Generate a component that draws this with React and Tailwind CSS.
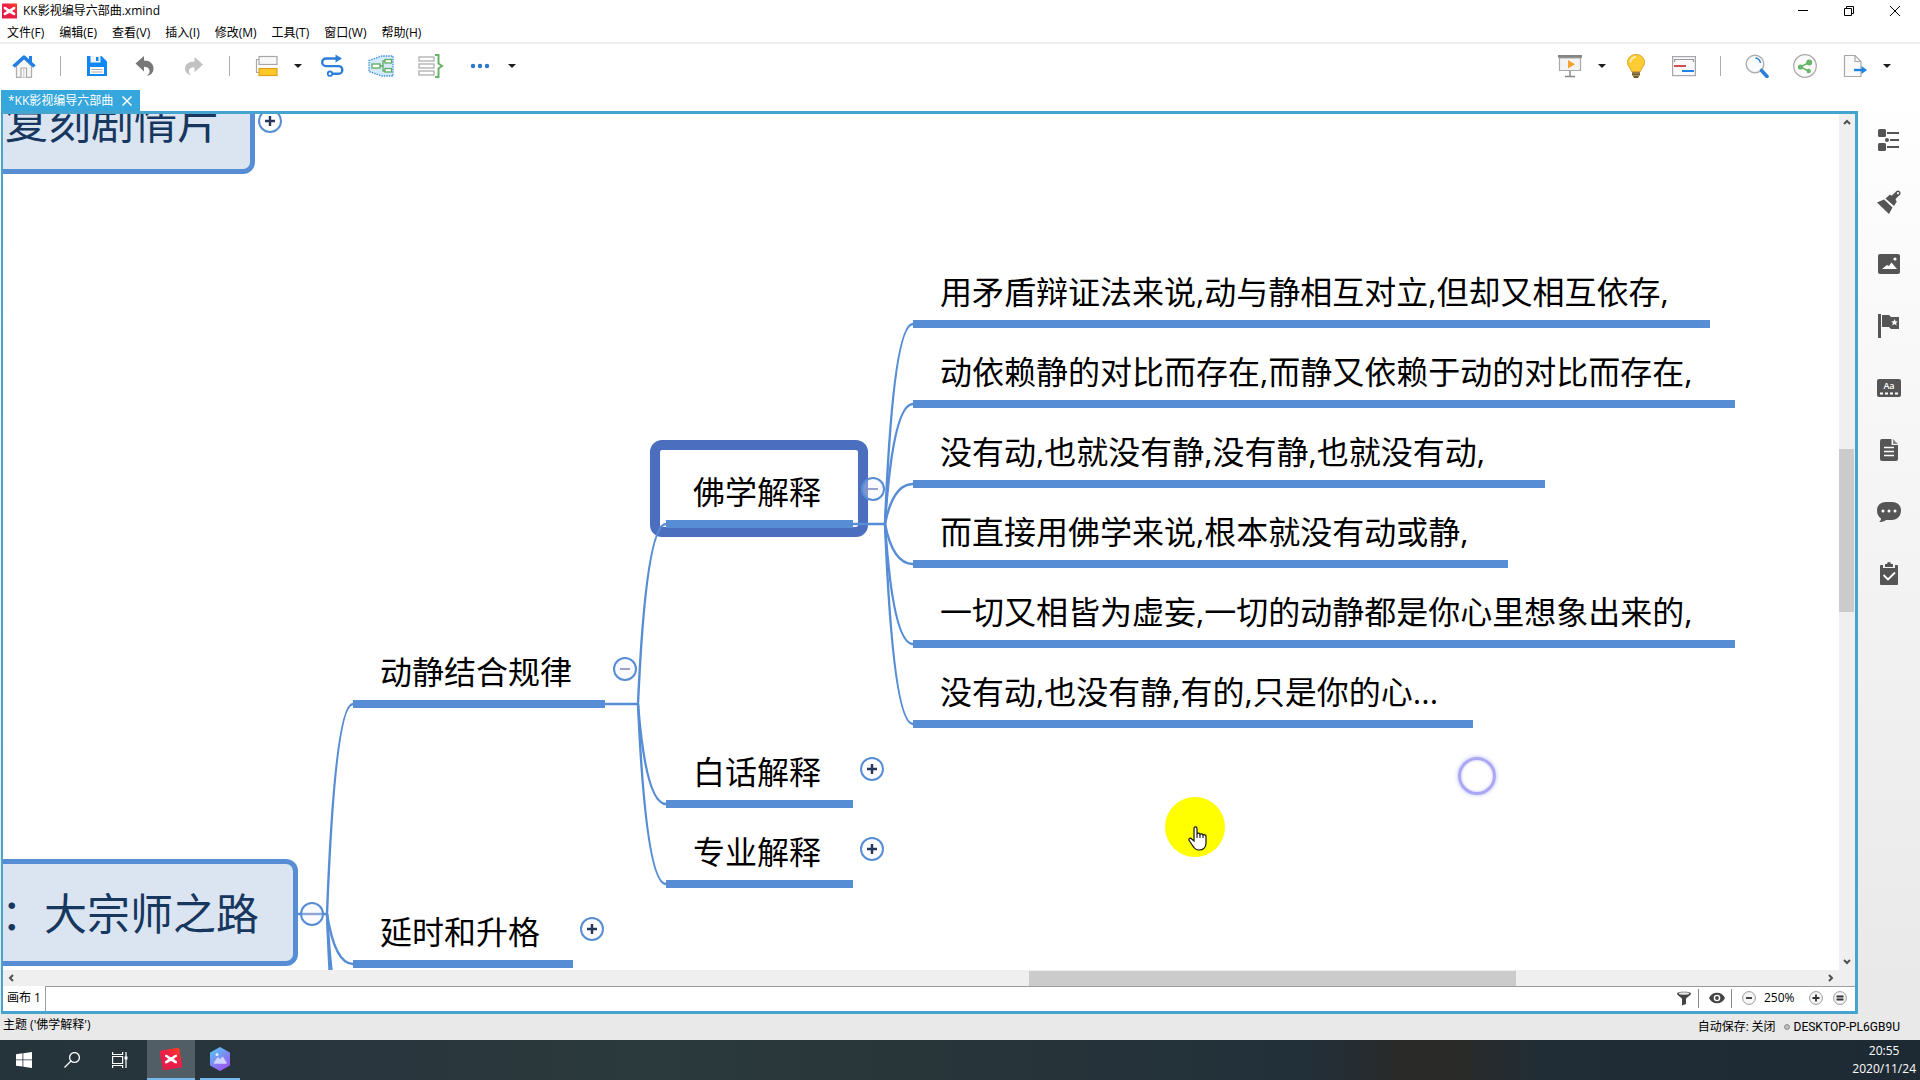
import { useState } from 'react'

const MENUS = ['文件(F)', '编辑(E)', '查看(V)', '插入(I)', '修改(M)', '工具(T)', '窗口(W)', '帮助(H)']

const LINE = '#568dd5'

// Canvas coordinates, origin at the top left corner of the sheet
const NODES = [
  { text: '动静结合规律', x: 350, y: 539, w: 252 },
  { text: '延时和升格', x: 350, y: 799, w: 220 },
  { text: '佛学解释', x: 663, y: 359, w: 187 },
  { text: '白话解释', x: 663, y: 639, w: 187 },
  { text: '专业解释', x: 663, y: 719, w: 187 },
  { text: '用矛盾辩证法来说,动与静相互对立,但却又相互依存,', x: 910, y: 159, w: 797 },
  { text: '动依赖静的对比而存在,而静又依赖于动的对比而存在,', x: 910, y: 239, w: 822 },
  { text: '没有动,也就没有静,没有静,也就没有动,', x: 910, y: 319, w: 632 },
  { text: '而直接用佛学来说,根本就没有动或静,', x: 910, y: 399, w: 595 },
  { text: '一切又相皆为虚妄,一切的动静都是你心里想象出来的,', x: 910, y: 479, w: 822 },
  { text: '没有动,也没有静,有的,只是你的心...', x: 910, y: 559, w: 560 },
]

const TOGGLES = [
  { x: 255, y: -5, open: false },
  { x: 297, y: 788, open: true },
  { x: 610, y: 543, open: true },
  { x: 577, y: 803, open: false },
  { x: 858, y: 363, open: true },
  { x: 857, y: 643, open: false },
  { x: 857, y: 723, open: false },
]

const BRANCHES = [
  { x: 324, y: 800, to: 350, ys: [590, 850, 930, 1010] },
  { x: 635, y: 590, to: 663, ys: [410, 690, 770] },
  { x: 882, y: 410, to: 910, ys: [210, 290, 370, 450, 530, 610] },
]

function Logo({ className, tilt }) {
  return (
    <svg viewBox="0 0 16 16" className={className}>
      <defs>
        <linearGradient id="logo" x1="1" y1="0" x2="0" y2="1">
          <stop offset="0" stopColor="#fb3f20" />
          <stop offset="0.4" stopColor="#f01f45" />
          <stop offset="1" stopColor="#e01c4c" />
        </linearGradient>
      </defs>
      <rect width="16" height="16" rx="0.6" fill="url(#logo)" transform={tilt ? 'rotate(-10 8 8) translate(0.8 0.8) scale(0.9)' : undefined} />
      <path
        d="M1.8 3.6C4.6 3.4 6 5.8 8 6.2 10 5.8 11.4 3.4 14.2 3.6L14 6C12.4 6.2 11.6 7.4 10.8 8.1 11.6 8.8 12.6 9.8 14.2 10.2L14 12.6C11.4 12.6 10 10.4 8 10 6 10.4 4.6 12.6 2 12.6L1.8 10.2C3.4 9.8 4.4 8.8 5.2 8.1 4.4 7.4 3.6 6.2 2 6z"
        fill="#fff"
        transform={tilt ? 'translate(2.4 2.4) scale(0.7)' : undefined}
      />
    </svg>
  )
}

function Tool({ label, wide, children }) {
  return (
    <button type="button" aria-label={label} className={wide ? 'w-[26px] h-6 shrink-0' : 'w-6 h-6 shrink-0'}>
      <svg viewBox={wide ? '0 0 26 24' : '0 0 24 24'} className="w-full h-full" fill="none">
        {children}
      </svg>
    </button>
  )
}

function Caret({ label }) {
  return (
    <button type="button" aria-label={label} className="w-2 h-6 flex items-center shrink-0">
      <svg viewBox="0 0 8 4" className="w-2 h-1">
        <path d="M0 0h8L4 4z" fill="#1d1d1d" />
      </svg>
    </button>
  )
}

function Toolbar() {
  return (
    <div className="h-[46px] mb-0.5 flex items-center justify-between pl-3 pr-[29px] border-t-2 border-[#efefef]">
      <div className="flex items-center gap-6">
        <Tool label="主页">
          <path d="M4.5 12v11.5h15V12L12 4.5z" fill="#f7f7f7" stroke="#b0b0b0" strokeWidth="1.3" />
          <path d="M9 23.5V14h5.5v9.5" fill="#fff" stroke="#a8a8a8" strokeWidth="1.2" />
          <path d="M11.8 14v9.5" stroke="#c4c4c4" />
          <path d="M1.5 12.5L12 3l10.500 9.5" stroke="#2080e4" strokeWidth="3.4" strokeLinejoin="round" />
          <path d="M17 2h3v6h-3z" fill="#2080e4" />
        </Tool>
        <div className="w-px h-5 bg-[#adadad]" />
        <Tool label="保存">
          <path d="M2 2h14.5L22 7.5V22H2z" fill="#0f87f5" />
          <path d="M5.5 2h10v6.5h-10z" fill="#f3f3f3" />
          <path d="M11 3h2.5v4H11z" fill="#0f87f5" />
          <path d="M5 13h14v7H5z" fill="#fff" />
          <path d="M6.5 15.5h11M6.5 18h11" stroke="#a9a9a9" strokeWidth="1.2" />
        </Tool>
        <Tool label="撤销">
          <path d="M2.500 9.500L11 2v4.500c6 0 9.500 3.300 9.500 8 0 4-2.500 6.500-6.500 7.500 2.500-2.300 3-4.500 2.300-6.300-.8-2-2.700-2.900-5.300-2.900v4.700z" fill="#777" />
        </Tool>
        <Tool label="重做">
          <path d="M22 10.500L13.500 3v4.500c-6 0-9.500 3-9.500 7 0 3.700 2.300 5.700 6 6.700-2-2-2.500-4-1.800-5.500.8-1.800 2.700-2.500 5.300-2.500v5z" fill="#c2c2c2" />
        </Tool>
        <div className="w-px h-5 bg-[#adadad]" />
        <div className="flex items-center gap-4 -mr-1.5">
          <Tool label="主题">
            <path d="M5 5.5H2.5v13H5" stroke="#a8a8a8" strokeWidth="1.2" />
            <rect x="5" y="2.5" width="18" height="8" fill="#f8f8f8" stroke="#a8a8a8" strokeWidth="1.2" />
            <rect x="5" y="14.500" width="18" height="7" fill="#ffc928" stroke="#dfa21e" strokeWidth="1.2" />
          </Tool>
          <Caret label="更多主题" />
        </div>
        <Tool label="联系">
          <path d="M17 4.5H6a3.8 3.8 0 0 0 0 7.6h12.5a3.8 3.8 0 0 1 0 7.6H12" stroke="#2b7fd8" strokeWidth="2.4" />
          <path d="M15.5 .5l6.5 4-6.5 4z" fill="#2b7fd8" />
          <circle cx="10" cy="19.7" r="2.2" stroke="#2b7fd8" strokeWidth="1.8" />
        </Tool>
        <Tool label="外框" wide>
          <path d="M1 6.5L14 2h11v20H14L1 17.5z" fill="#d4ebfb" stroke="#3f8ede" strokeWidth="1.3" strokeDasharray="1.5 1" />
          <path d="M12 12h3M17 7h-2v10h2" stroke="#62a960" strokeWidth="1.3" />
          <rect x="4" y="10" width="8" height="4" fill="#fff" stroke="#62a960" strokeWidth="1.3" />
          <rect x="17" y="5.5" width="6.5" height="3.5" fill="#fff" stroke="#62a960" strokeWidth="1.3" />
          <rect x="17" y="14.5" width="6.5" height="3.5" fill="#fff" stroke="#62a960" strokeWidth="1.3" />
        </Tool>
        <Tool label="概要" wide>
          <rect x="1" y="3" width="15" height="4" stroke="#a8a8a8" strokeWidth="1.2" />
          <rect x="1" y="10" width="15" height="4" stroke="#a8a8a8" strokeWidth="1.2" />
          <rect x="1" y="17" width="15" height="4" stroke="#a8a8a8" strokeWidth="1.2" />
          <path d="M17 1h3.5v8.5L24 12l-3.5 2.5V23H17" stroke="#6bb167" strokeWidth="2" />
        </Tool>
        <div className="flex items-center gap-4">
          <Tool label="更多">
            <circle cx="5" cy="12" r="2.2" fill="#2b76d0" />
            <circle cx="12" cy="12" r="2.2" fill="#2b76d0" />
            <circle cx="19" cy="12" r="2.2" fill="#2b76d0" />
          </Tool>
          <Caret label="更多选项" />
        </div>
      </div>

      <div className="flex items-center gap-6">
        <div className="flex items-center gap-4 -mr-1.5">
          <Tool label="演示">
            <path d="M1.5 4h21v12.5h-21z" fill="#f4f4f4" stroke="#a8a8a8" strokeWidth="1.2" />
            <path d="M0 1h24v2.8H0z" fill="#858585" />
            <path d="M10 6l7 4.3-7 4.3z" fill="#f5a32f" />
            <path d="M12 17v5M7 22.5h10" stroke="#858585" strokeWidth="1.4" />
          </Tool>
          <Caret label="演示选项" />
        </div>
        <Tool label="头脑风暴">
          <path d="M8 17h8v3.5L14 24h-4l-2-3.5z" fill="#6f5a2d" />
          <path d="M8 19h8M8 21.5h8" stroke="#c3a869" strokeWidth="0.8" />
          <path d="M12 .5c5 0 8.5 3.5 8.5 8 0 4-3.3 5-4 9h-9c-.7-4-4-5-4-9C3.5 4 7 .5 12 .5z" fill="#fdcb34" stroke="#dda42b" />
          <path d="M6.5 8.5C6.5 5 9 3 12 3" stroke="#ffeeb0" strokeWidth="2" />
        </Tool>
        <Tool label="甘特图">
          <rect x="0.6" y="2.6" width="22.8" height="19" fill="#fafafa" stroke="#a5a5ae" strokeWidth="1.2" />
          <path d="M2.5 8V5.5h19V8" stroke="#9a9a9a" strokeWidth="1.2" />
          <path d="M2 12h12" stroke="#cf4f56" strokeWidth="2" />
          <path d="M10 17h12" stroke="#2083e4" strokeWidth="2" />
        </Tool>
        <div className="w-px h-5 bg-[#adadad]" />
        <Tool label="搜索">
          <circle cx="10" cy="10" r="8.8" fill="#f8fafc" stroke="#adadad" strokeWidth="1.4" />
          <path d="M10.500 4c2.500.3 4.500 2.300 5 5" stroke="#2b7fd8" strokeWidth="1.3" />
          <path d="M16.500 16.500l5.500 6" stroke="#2b7fd8" strokeWidth="3.6" strokeLinecap="round" />
        </Tool>
        <Tool label="分享">
          <circle cx="12" cy="12" r="11.3" fill="#fafafa" stroke="#a8a8a8" strokeWidth="1.2" />
          <path d="M16 8.5L7.5 13l8 4" stroke="#6bb56b" strokeWidth="1.5" />
          <circle cx="16.2" cy="8.5" r="3" fill="#6bb56b" />
          <circle cx="7.5" cy="13" r="2.6" fill="#6bb56b" />
          <circle cx="15.7" cy="17" r="2.2" fill="#6bb56b" />
        </Tool>
        <div className="flex items-center gap-4 ml-0.5">
          <Tool label="导出">
            <path d="M1.5 1.5H12l6 6v15H1.5z" fill="#fafafa" stroke="#a8a8a8" strokeWidth="1.2" />
            <path d="M12 1.5v6h6" stroke="#a8a8a8" strokeWidth="1.2" />
            <path d="M11 16h8" stroke="#2083e4" strokeWidth="2.4" />
            <path d="M18.5 12l5.5 4-5.5 4z" fill="#2083e4" />
          </Tool>
          <Caret label="导出选项" />
        </div>
      </div>
    </div>
  )
}

function Toggle({ x, y, open }) {
  return (
    <button type="button" aria-label={open ? '收起' : '展开'} className="absolute w-6 h-6" style={{ left: x, top: y }}>
      <svg viewBox="0 0 24 24" className="w-6 h-6">
        <circle cx="12" cy="12" r="11" fill={open ? '#eef1fb' : '#fff'} fillOpacity={open ? 0.3 : 1} stroke={LINE} strokeWidth="2" />
        {open ? (
          <path d="M7 12h10" stroke="#9a9fcb" strokeWidth="2" />
        ) : (
          <path d="M7 12h10M12 7v10" stroke="#27375c" strokeWidth="2.4" />
        )}
      </svg>
    </button>
  )
}

function MindMap() {
  return (
    <div className="relative flex-1 min-w-0 overflow-hidden bg-white">
      <div className="absolute left-0 -top-10 w-[252px] h-[100px] flex items-end pb-4 pl-0.5 bg-[#dbe5f2] border-[5px] border-l-0 border-[#568dd5] rounded-r-xl text-[43px] leading-[60px] text-[#17375e] whitespace-nowrap">
        复刻剧情片
      </div>
      <div className="absolute left-0 top-[745px] w-[295px] h-[107px] flex items-center justify-end pr-[34px] pt-0.5 bg-[#dbe5f2] border-[5px] border-l-0 border-[#568dd5] rounded-r-xl text-[43px] leading-[60px] text-[#17375e] whitespace-nowrap">
        ：大宗师之路
      </div>

      <div className="absolute left-[647px] top-[326px] w-[218px] h-[97px] border-[10px] border-[#4b6ebf] rounded-xl" />

      <svg className="absolute inset-0 w-full h-full" fill="none" stroke={LINE} strokeWidth="2.4">
        <path d="M295 800h29M602 590h33M850 410h32" />
        {BRANCHES.map((b) =>
          b.ys.map((y) => <path key={`${b.x}-${y}`} d={`M${b.x} ${b.y}Q${b.x + 8} ${y} ${b.to} ${y}`} />)
        )}
      </svg>

      {NODES.map((n) => (
        <div
          key={n.text}
          className="absolute h-[55px] pl-[27px] border-b-8 border-[#568dd5] text-[32px] leading-[38px] text-black whitespace-nowrap"
          style={{ left: n.x, top: n.y, width: n.w }}
        >
          {n.text}
        </div>
      ))}

      {TOGGLES.map((t) => (
        <Toggle key={`${t.x}-${t.y}`} {...t} />
      ))}

      {/* click ripple and pointer highlight */}
      <div className="absolute left-[1455px] top-[643px] w-[38px] h-[38px] rounded-full border-[3px] border-[#aaa8f4] shadow-[0_0_4px_#b9b7fa,inset_0_0_3px_#b9b7fa]" />
      <div className="absolute left-[1162px] top-[683px] w-[60px] h-[60px] rounded-full bg-[#ffff00]">
        <svg viewBox="0 0 19 25" className="absolute left-[23px] top-[29px] w-[19px] h-[25px]">
          <path
            d="M6 15V2.500C6 .3 9 .3 9 2.500V8c.5-1.300 2.800-1.200 3 .5.7-1.100 2.700-.8 3 .7.800-.9 3-.5 3 1.300V17c0 4-2.500 7-7 7-3.500 0-5-1.800-6.500-4.500L1.200 14.500C.2 12.500 2.400 11.500 3.700 13z"
            fill="#fff"
            stroke="#111"
            strokeWidth="1.2"
          />
          <path d="M9 8v4M12 8.500V12M15 9.500V12" stroke="#111" strokeWidth="1.1" />
        </svg>
      </div>
    </div>
  )
}

function Arrow({ d, label }) {
  return (
    <button type="button" aria-label={label} className="w-4 h-4 flex items-center justify-center shrink-0">
      <svg viewBox="0 0 8 8" className="w-2 h-2" fill="none" stroke="#505050" strokeWidth="2">
        <path d={d} />
      </svg>
    </button>
  )
}

function Zoom({ label, d }) {
  return (
    <button type="button" aria-label={label} className="w-3.5 h-3.5">
      <svg viewBox="0 0 14 14" className="w-3.5 h-3.5" fill="#f6f6f6">
        <circle cx="7" cy="7" r="6.4" stroke="#999" />
        <path d={d} stroke="#333" strokeWidth="1.8" />
      </svg>
    </button>
  )
}

function SheetBar() {
  return (
    <div className="h-[25px] flex items-stretch bg-white">
      <button type="button" className="px-1 pb-0.5 border-r border-[#9c9c9c] whitespace-nowrap">画布 1</button>
      <div className="flex-1 flex items-center justify-end border-t border-[#9c9c9c] pr-2 pb-0.5">
        <button type="button" aria-label="筛选" className="w-4 h-4">
          <svg viewBox="0 0 16 16" className="w-4 h-4">
            <path d="M1 3.500C1 1 15 1 15 3.500c0 2-5 4-5 5.500V14l-4 1.500V9C6 7.500 1 5.500 1 3.500z" fill="#444" />
            <ellipse cx="8" cy="3.5" rx="5.3" ry="1.2" fill="#e8e8e8" />
          </svg>
        </button>
        <div className="w-px h-[19px] bg-[#8a8a8a] ml-1.5 mr-2.5" />
        <button type="button" aria-label="显示" className="w-4 h-4">
          <svg viewBox="0 0 16 16" className="w-4 h-4">
            <path d="M0 8c3-7 13-7 16 0-3 7-13 7-16 0z" fill="#444" />
            <circle cx="8" cy="8" r="3.3" fill="#fff" />
            <circle cx="8" cy="8" r="1.9" fill="#444" />
          </svg>
        </button>
        <div className="w-px h-[19px] bg-[#8a8a8a] ml-1.5 mr-2.5" />
        <Zoom label="缩小" d="M4 7h6" />
        <span className="w-[53px] pl-2">250%</span>
        <Zoom label="放大" d="M3.5 7h7M7 3.5v7" />
        <div className="w-2.5" />
        <Zoom label="实际大小" d="M3.5 5.5h7M3.5 8.5h7" />
      </div>
    </div>
  )
}

const PANELS = [
  {
    label: '大纲',
    icon: (
      <>
        <rect x="1" y="1" width="8" height="8" rx="1.5" />
        <rect x="1" y="15" width="8" height="8" rx="1.5" />
        <circle cx="10" cy="12" r="2" />
        <path d="M10 4h12v2H10zM13 11h9v2h-9zM10 18h12v2H10z" />
      </>
    ),
  },
  {
    label: '格式',
    icon: (
      <>
        <path d="M8.500 8.500L13 4.500c1 1.500 2 1 3 0l3.500-3.500c2.200-2 5.500 1.500 3.500 3.700L19.500 8c-1 1-1.300 2 .3 3.500L17 16z" />
        <path d="M7 9.500l8.500 8L12 24 0 12.500z" />
        <circle cx="21" cy="3.2" r="1.1" fill="#fafafa" />
      </>
    ),
  },
  {
    label: '图片',
    icon: (
      <>
        <rect x="1" y="2" width="22" height="20" rx="2" />
        <path d="M5 17l5-4 2 1 2.500-3.500L20 17z" fill="#fff" />
        <circle cx="18" cy="7" r="1.6" fill="#fff" />
      </>
    ),
  },
  {
    label: '图标',
    icon: (
      <>
        <path d="M1 0h3v24H1zM5 1h7l2 2h8v12h-8l-2-2H5z" />
        <path d="M17.500 5l1 2.300 2.300.2-1.700 1.500.6 2.400-2.200-1.300-2.200 1.300.6-2.400-1.700-1.500 2.300-.2z" fill="#fff" />
      </>
    ),
  },
  {
    label: '主题标签',
    icon: (
      <>
        <rect x="0" y="3" width="24" height="18" rx="2" />
        <text x="12" y="13" textAnchor="middle" fontSize="9" fontWeight="600" fill="#fff">Aa</text>
        <path d="M3 17.500h18" stroke="#fff" strokeWidth="1.8" strokeDasharray="3 2" />
      </>
    ),
  },
  {
    label: '备注',
    icon: (
      <>
        <path d="M5 1h9.500v6H21v14a2 2 0 0 1-2 2H5a2 2 0 0 1-2-2V3a2 2 0 0 1 2-2z" />
        <path d="M16 1l5 5h-5z" fill="#8c8c8c" />
        <path d="M7 9.500h10M7 13.500h10M7 17.500h10" stroke="#fff" strokeWidth="1.3" />
      </>
    ),
  },
  {
    label: '批注',
    icon: (
      <>
        <path d="M9 2h6c5 0 9 3 9 8.500S20 20 15 20H9c-2 1.500-4 2-7 2 1.500-1 2-2 2-3.500C1.500 17 0 14 0 10.500 0 5 4 2 9 2z" />
        <circle cx="6" cy="11" r="1.5" fill="#fff" />
        <circle cx="12" cy="11" r="1.5" fill="#fff" />
        <circle cx="18" cy="11" r="1.5" fill="#fff" />
      </>
    ),
  },
  {
    label: '任务',
    icon: (
      <>
        <path d="M4 3h2v3h12V3h2a1 1 0 0 1 1 1v18a1 1 0 0 1-1 1H4a1 1 0 0 1-1-1V4a1 1 0 0 1 1-1z" />
        <path d="M8 5V2h2a2 2 0 0 1 4 0h2v3z" />
        <path d="M6.500 13l4.500 4.500 7-7" fill="none" stroke="#fff" strokeWidth="1.8" />
      </>
    ),
  },
]

function Taskbar() {
  return (
    <div className="h-10 flex justify-between text-white bg-[linear-gradient(90deg,#25333b_0%,#29363d_20%,#2b3a3c_34%,#273439_52%,#22303a_68%,#2a2a29_73%,#2a2a29_76%,#212d36_80%,#1e2a33_100%)]">
      <div className="flex">
        <button type="button" aria-label="开始" className="w-12 flex items-center justify-center">
          <svg viewBox="0 0 16 16" className="w-4 h-4" fill="#fff">
            <path d="M0 2.200L6.500 1.300v6.200H0zM7.300 1.200L16 0v7.500H7.300zM0 8.300h6.500v6.300L0 13.700zM7.300 8.300H16V16l-8.700-1.200z" />
          </svg>
        </button>
        <button type="button" aria-label="搜索" className="w-12 flex items-center justify-center">
          <svg viewBox="0 0 16 16" className="w-4 h-4" fill="none" stroke="#fff" strokeWidth="1.3">
            <circle cx="10.5" cy="5.5" r="4.9" />
            <path d="M7 9L.5 15.5" />
          </svg>
        </button>
        <button type="button" aria-label="任务视图" className="w-12 flex items-center justify-center">
          <svg viewBox="0 0 16 16" className="w-4 h-4" fill="none" stroke="#fff" strokeWidth="1.2">
            <path d="M.6 0v2.500h10V0M.6 16v-2.500h10V16M.6 4.500h10v7H.6zM14 0v16" />
            <path d="M12.500 4.500h3v3h-3z" fill="#fff" stroke="none" />
          </svg>
        </button>
        <button type="button" aria-label="XMind" className="w-12 ml-[3px] flex items-center justify-center bg-[#525e65] border-b-2 border-[#76b9ed]">
          <Logo className="w-[22px] h-[22px]" tilt />
        </button>
        <button type="button" aria-label="图片" className="w-10 ml-[5px] flex items-center justify-center border-b-2 border-[#76b9ed]">
          <svg viewBox="0 0 22 24" className="w-[22px] h-6">
            <defs>
              <linearGradient id="hex" x1="0" y1="0" x2="0.6" y2="1">
                <stop offset="0" stopColor="#55c8f5" />
                <stop offset="1" stopColor="#9a5cf0" />
              </linearGradient>
            </defs>
            <path d="M11 1l9 5v12l-9 5-9-5V6z" fill="url(#hex)" stroke="url(#hex)" strokeWidth="2" strokeLinejoin="round" />
            <path d="M5.500 16l3.500-5 2.500 2.500 2-3 3.500 5.500z" fill="#cdd4ff" stroke="#cdd4ff" strokeWidth="1.5" strokeLinejoin="round" />
            <circle cx="8" cy="7.500" r="1.5" fill="#d8f0ff" />
          </svg>
        </button>
      </div>
      <div className="pr-1 pt-0.5 text-center leading-[18px]">
        <div>20:55</div>
        <div>2020/11/24</div>
      </div>
    </div>
  )
}

export default function App() {
  const [panel, setPanel] = useState(null)

  return (
    <div className="h-screen flex flex-col overflow-hidden bg-white text-black text-xs leading-4 font-['Open_Sans','Noto_Sans_CJK_SC',sans-serif]">
      <header>
        <div className="h-[22px] flex items-center justify-between pl-0.5 pr-5">
          <div className="flex items-center gap-1.5">
            <Logo className="w-[15px] h-4" />
            <span>KK影视编导六部曲.xmind</span>
          </div>
          <div className="flex gap-9 items-center">
            <button type="button" aria-label="最小化" className="w-2.5 h-2.5">
              <svg viewBox="0 0 10 10" className="w-2.5 h-2.5"><path d="M0 4.5h10" stroke="#000" /></svg>
            </button>
            <button type="button" aria-label="还原" className="w-2.5 h-2.5">
              <svg viewBox="0 0 10 10" className="w-2.5 h-2.5" fill="none" stroke="#000"><path d="M.5 2.5h7v7h-7zM2.5 2.5v-2h7v7h-2" /></svg>
            </button>
            <button type="button" aria-label="关闭" className="w-2.5 h-2.5">
              <svg viewBox="0 0 10 10" className="w-2.5 h-2.5" stroke="#000"><path d="M0 0l10 10M10 0L0 10" /></svg>
            </button>
          </div>
        </div>
        <nav className="h-5 flex items-center gap-px pt-0.5">
          {MENUS.map((m) => (
            <button key={m} type="button" className="px-[7px] whitespace-nowrap">{m}</button>
          ))}
        </nav>
        <Toolbar />
      </header>

      <div className="flex-1 min-h-0 flex flex-col bg-[linear-gradient(180deg,#fff_0%,#fafafa_20%,#e9e9e9_95%)]">
        <div className="flex-1 min-h-0 flex">
          <main className="flex-1 min-w-0 flex flex-col pl-px">
            <div className="h-[21px] flex">
              <div className="w-[139px] flex items-center justify-between pl-[7px] pr-2 bg-[#35a7dc] text-white whitespace-nowrap">
                <span>*KK影视编导六部曲</span>
                <button type="button" aria-label="关闭标签" className="w-2.5 h-2.5">
                  <svg viewBox="0 0 10 10" className="w-2.5 h-2.5" stroke="#fff" strokeWidth="1.5"><path d="M.5.5l9 9M9.5.5l-9 9" /></svg>
                </button>
              </div>
            </div>
            <div className="flex-1 min-h-0 flex flex-col border-[3px] border-l-2 border-[#45a5cf]">
              <div className="flex-1 min-h-0 flex">
                <MindMap />
                <div className="w-4 flex flex-col bg-[#efefef]">
                  <Arrow label="向上" d="M1 6l3-3 3 3" />
                  <div className="flex-1 min-h-0 pt-[319px]">
                    <div className="h-[163px] w-[15px] bg-[#cbcbcb]" />
                  </div>
                  <Arrow label="向下" d="M1 2l3 3 3-3" />
                </div>
              </div>
              <div className="h-4 flex items-center bg-[#efefef] pr-4">
                <Arrow label="向左" d="M6 1L3 4l3 3" />
                <div className="flex-1 flex">
                  <div className="w-[56%]" />
                  <div className="w-[27%] h-[15px] bg-[#cbcbcb]" />
                </div>
                <Arrow label="向右" d="M2 1l3 3-3 3" />
              </div>
              <SheetBar />
            </div>
          </main>

          <aside className="w-[62px] flex flex-col items-center gap-[38px] pt-[38px]">
            {PANELS.map((p) => (
              <button key={p.label} type="button" aria-label={p.label} aria-pressed={panel === p.label} onClick={() => setPanel(p.label)} className="w-6 h-6">
                <svg viewBox="0 0 24 24" className="w-6 h-6" fill="#555">{p.icon}</svg>
              </button>
            ))}
          </aside>
        </div>

        <footer className="h-[26px] flex justify-between pl-[3px] pr-5 bg-[#e9e9e9]">
          <span className="pt-[3px]">主题 ('佛学解释')</span>
          <div className="flex items-center gap-2 font-['Roboto','Noto_Sans_CJK_SC',sans-serif]">
            <span>自动保存: 关闭</span>
            <span className="flex items-center gap-1">
              <span className="w-1.5 h-1.5 rounded-full bg-[#bbb] border border-[#909090]" />
              DESKTOP-PL6GB9U
            </span>
          </div>
        </footer>
      </div>

      <Taskbar />
    </div>
  )
}
